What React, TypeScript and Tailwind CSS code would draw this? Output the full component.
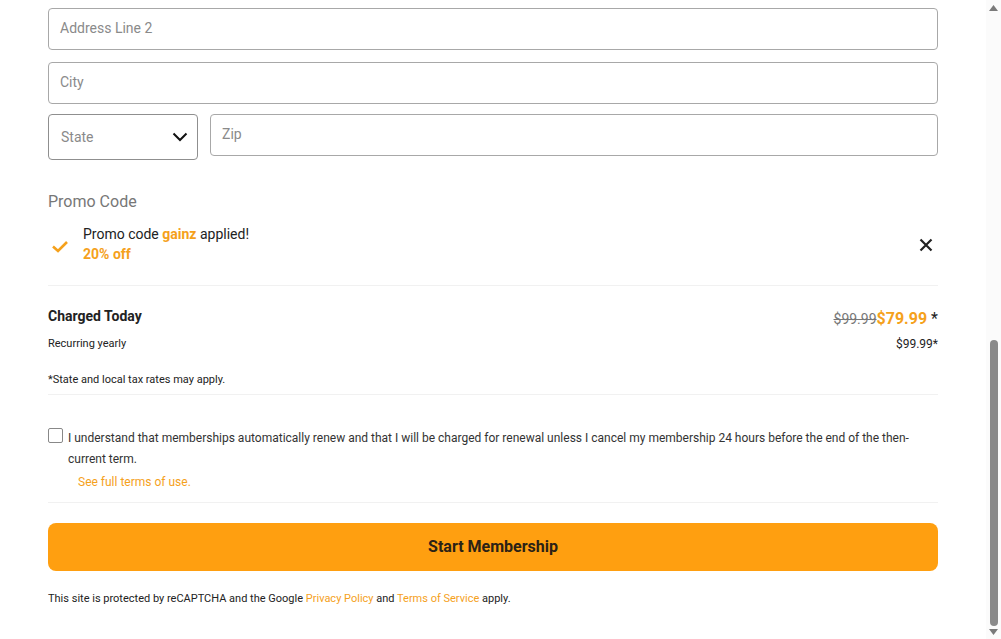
import React from "react";

const orange = "text-[#f5a11c]";

function Input({ placeholder, className = "" }: { placeholder: string; className?: string }) {
  return (
    <div
      className={`flex h-[42px] items-center rounded-[4px] border border-[#a8a8a8] px-[11px] pb-[2px] text-[14px] text-[#8a8a8a] ${className}`}
    >
      {placeholder}
    </div>
  );
}

export default function App() {
  return (
    <div
      className="flex h-[639px] w-full overflow-hidden bg-white text-[#222]"
      style={{ fontFamily: "Roboto, 'Liberation Sans', Arial, sans-serif" }}
    >
      <div className="flex-1">
        <div className="mx-auto flex w-[890px] flex-col pt-[8px]">
          <Input placeholder="Address Line 2" />
          <Input placeholder="City" className="mt-[12px]" />
          <div className="mt-[10px] flex items-start gap-[12px]">
            <div className="flex h-[46px] w-[150px] items-center justify-between rounded-[4px] border border-[#8f8f8f] pl-[12px] pr-[9px] text-[14px] text-[#8a8a8a]">
              <span>State</span>
              <svg width="16" height="10" viewBox="0 0 16 10" fill="none">
                <path d="M1.5 1.5 L8 8 L14.5 1.5" stroke="#111" strokeWidth="2" />
              </svg>
            </div>
            <div className="flex h-[42px] flex-1 items-start rounded-[4px] border border-[#a8a8a8] px-[11px] pt-[9px] text-[14px] text-[#8a8a8a]">
              Zip
            </div>
          </div>

          <div className="mt-[32px] text-[16px] leading-[20px] text-[#777]">Promo Code</div>

          <div className="mt-[13px] flex items-center border-b border-[#f1f1f1] pb-[20px]">
            <svg width="18" height="14" viewBox="0 0 18 14" className="ml-[3px] mr-[14px] mt-[3px]">
              <path d="M2 6.5 L7 11 L16 2" stroke="#f5a11c" strokeWidth="2.6" fill="none" />
            </svg>
            <div className="flex-1">
              <div className="text-[14px] leading-[19px] text-[#222]">
                Promo code <span className={`font-bold ${orange}`}>gainz</span> applied!
              </div>
              <div className={`text-[14px] font-bold leading-[21px] ${orange}`}>20% off</div>
            </div>
            <svg width="14" height="14" viewBox="0 0 14 14" className="mr-[5px]">
              <path d="M1.5 1.5 L12.5 12.5 M12.5 1.5 L1.5 12.5" stroke="#222" strokeWidth="2.2" />
            </svg>
          </div>

          <div className="border-b border-[#f1f1f1] pb-[6px] pt-[21px]">
            <div className="flex items-start justify-between">
              <div className="text-[14px] font-bold leading-[18px] text-[#222]">Charged Today</div>
              <div className="flex items-baseline">
                <span className="text-[14px] text-[#777] line-through">$99.99</span>
                <span className={`text-[16px] font-bold ${orange}`}>$79.99</span>
                <span className="ml-[4px] text-[16px] text-[#222]">*</span>
              </div>
            </div>
            <div className="mt-[5px] flex items-center justify-between">
              <div className="text-[11px] leading-[16px] text-[#222]">Recurring yearly</div>
              <div className="text-[12px] leading-[16px] text-[#222]">$99.99*</div>
            </div>
            <div className="mt-[20px] text-[11px] leading-[16px] text-[#222]">
              *State and local tax rates may apply.
            </div>
          </div>

          <div className="border-b border-[#f1f1f1] pb-[10px] pt-[36px]">
            <div className="flex items-start">
              <div className="mr-[5px] mt-[-3px] h-[15px] w-[15px] shrink-0 rounded-[2px] border border-[#888] bg-white" />
              <div className="text-[12px] leading-[21px] text-[#333]" style={{ marginTop: -3 }}>
                I understand that memberships automatically renew and that I will be charged for renewal unless I cancel my
                membership 24 hours before the end of the then-current term.
              </div>
            </div>
            <div className={`ml-[30px] mt-[2px] text-[12px] leading-[20px] ${orange}`}>See full terms of use.</div>
          </div>

          <button className="mt-[20px] flex h-[48px] w-full items-center justify-center rounded-[8px] bg-[#ff9f10] text-[16px] font-bold text-[#2b2216]">
            Start Membership
          </button>

          <div className="mt-[20px] text-[11px] leading-[16px] text-[#222]">
            This site is protected by reCAPTCHA and the Google <span className={orange}>Privacy Policy</span> and{" "}
            <span className={orange}>Terms of Service</span> apply.
          </div>
        </div>
      </div>

      <div className="flex w-[15px] flex-col items-center bg-[#fbfbfb]">
        <svg width="9" height="6" viewBox="0 0 9 6" className="mt-[5px]">
          <path d="M0 6 L4.5 0 L9 6 Z" fill="#7a7a7a" />
        </svg>
        <div className="flex-1" />
        <div className="mb-[3px] h-[286px] w-[8px] rounded-full bg-[#8a8a8a]" />
        <svg width="9" height="6" viewBox="0 0 9 6" className="mb-[4px]">
          <path d="M0 0 L4.5 6 L9 0 Z" fill="#7a7a7a" />
        </svg>
      </div>
    </div>
  );
}
